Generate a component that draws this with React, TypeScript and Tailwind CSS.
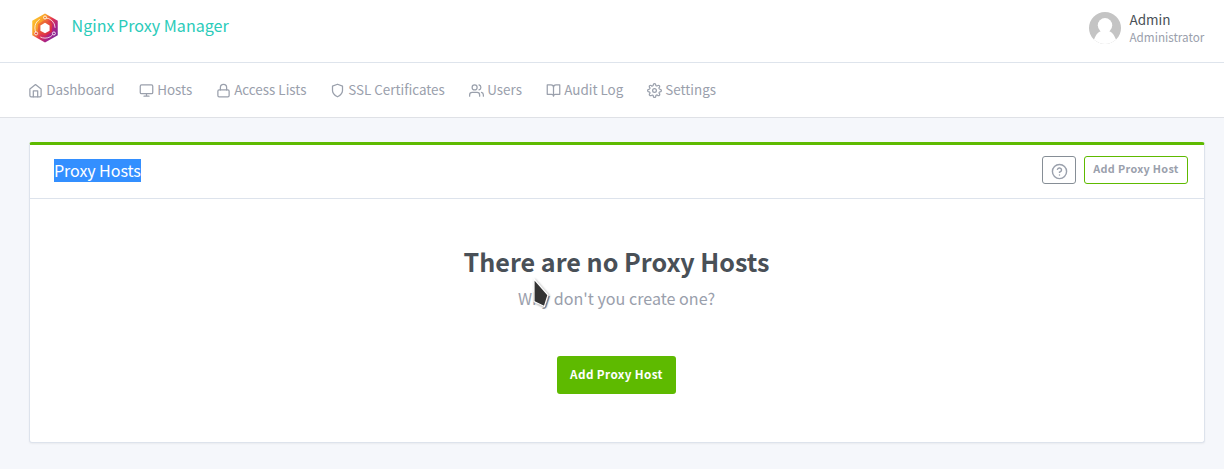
import React from "react";

type IconProps = { className?: string; children: React.ReactNode };

function Icon({ className = "", children }: IconProps) {
  return (
    <svg
      viewBox="0 0 24 24"
      fill="none"
      stroke="currentColor"
      strokeWidth={2}
      strokeLinecap="round"
      strokeLinejoin="round"
      className={`shrink-0 ${className}`}
    >
      {children}
    </svg>
  );
}

const navItems: { label: string; width: string; icon: React.ReactNode }[] = [
  {
    label: "Dashboard",
    width: "w-[111px]",
    icon: (
      <>
        <path d="M3 9.5 12 2.5l9 7V20a2 2 0 0 1-2 2H5a2 2 0 0 1-2-2z" />
        <path d="M8.5 22V12.5h7V22" />
      </>
    ),
  },
  {
    label: "Hosts",
    width: "w-[77px]",
    icon: (
      <>
        <rect x="2" y="3" width="20" height="14" rx="2" />
        <path d="M8 21h8M12 17v4" />
      </>
    ),
  },
  {
    label: "Access Lists",
    width: "w-[114px]",
    icon: (
      <>
        <rect x="3" y="11" width="18" height="11" rx="2" />
        <path d="M7 11V7a5 5 0 0 1 10 0v4" />
      </>
    ),
  },
  {
    label: "SSL Certificates",
    width: "w-[139px]",
    icon: <path d="M12 22s8-4 8-10V5l-8-3-8 3v7c0 6 8 10 8 10z" />,
  },
  {
    label: "Users",
    width: "w-[77px]",
    icon: (
      <>
        <path d="M17 21v-2a4 4 0 0 0-4-4H5a4 4 0 0 0-4 4v2" />
        <circle cx="9" cy="7" r="4" />
        <path d="M23 21v-2a4 4 0 0 0-3-3.87M16 3.13a4 4 0 0 1 0 7.75" />
      </>
    ),
  },
  {
    label: "Audit Log",
    width: "w-[101px]",
    icon: <path d="M2 3h6a4 4 0 0 1 4 4v14a3 3 0 0 0-3-3H2zM22 3h-6a4 4 0 0 0-4 4v14a3 3 0 0 1 3-3h7z" />,
  },
  {
    label: "Settings",
    width: "w-[90px]",
    icon: (
      <>
        <circle cx="12" cy="12" r="3" />
        <path d="M19.4 15a1.65 1.65 0 0 0 .33 1.82l.06.06a2 2 0 0 1 0 2.83 2 2 0 0 1-2.83 0l-.06-.06a1.65 1.65 0 0 0-1.82-.33 1.65 1.65 0 0 0-1 1.51V21a2 2 0 0 1-2 2 2 2 0 0 1-2-2v-.09A1.65 1.65 0 0 0 9 19.4a1.65 1.65 0 0 0-1.82.33l-.06.06a2 2 0 0 1-2.83 0 2 2 0 0 1 0-2.83l.06-.06a1.65 1.65 0 0 0 .33-1.82 1.65 1.65 0 0 0-1.51-1H3a2 2 0 0 1-2-2 2 2 0 0 1 2-2h.09A1.65 1.65 0 0 0 4.6 9a1.65 1.65 0 0 0-.33-1.82l-.06-.06a2 2 0 0 1 0-2.83 2 2 0 0 1 2.83 0l.06.06a1.65 1.65 0 0 0 1.82.33H9a1.65 1.65 0 0 0 1-1.51V3a2 2 0 0 1 2-2 2 2 0 0 1 2 2v.09a1.65 1.65 0 0 0 1 1.51 1.65 1.65 0 0 0 1.82-.33l.06-.06a2 2 0 0 1 2.83 0 2 2 0 0 1 0 2.83l-.06.06a1.65 1.65 0 0 0-.33 1.82V9a1.65 1.65 0 0 0 1.51 1H21a2 2 0 0 1 2 2 2 2 0 0 1-2 2h-.09a1.65 1.65 0 0 0-1.51 1z" />
      </>
    ),
  },
];

function Logo() {
  return (
    <svg viewBox="0 0 28 32" className="mt-px h-[30px] w-[28px] shrink-0">
      <defs>
        <linearGradient id="warm" x1="0" y1="0.1" x2="1" y2="0.9">
          <stop offset="0" stopColor="#fdd02c" />
          <stop offset="0.3" stopColor="#f9a02c" />
          <stop offset="0.52" stopColor="#e3364f" />
          <stop offset="0.75" stopColor="#a5218a" />
          <stop offset="1" stopColor="#6b2a9a" />
        </linearGradient>
        <linearGradient id="core" x1="0" y1="0" x2="1" y2="1">
          <stop offset="0" stopColor="#f7892a" />
          <stop offset="1" stopColor="#d3124f" />
        </linearGradient>
      </defs>
      <path d="M14 0.5 27.6 8.2v15.6L14 31.5.4 23.8V8.2z" fill="url(#warm)" />
      <circle cx="14" cy="16" r="10.8" fill="none" stroke="#fff" strokeOpacity="0.8" strokeWidth="1" strokeDasharray="17 5.6" strokeDashoffset="-5" />
      <path d="M14 7.4 21.4 11.7v8.6L14 24.6l-7.4-4.3v-8.6z" fill="url(#core)" />
      <path d="M14 10.4 18.9 13.2v5.6L14 21.6l-4.9-2.8v-5.6z" fill="#fff" />
      <circle cx="14" cy="4.8" r="1.6" fill="#f58a2c" stroke="#fff" strokeWidth="0.9" />
      <circle cx="4.5" cy="21.8" r="1.6" fill="#e8453a" stroke="#fff" strokeWidth="0.9" />
      <circle cx="23.5" cy="21.8" r="1.6" fill="#8d2490" stroke="#fff" strokeWidth="0.9" />
    </svg>
  );
}

function Avatar() {
  return (
    <svg viewBox="0 0 32 32" className="size-8 shrink-0">
      <defs>
        <clipPath id="round">
          <circle cx="16" cy="16" r="16" />
        </clipPath>
      </defs>
      <g clipPath="url(#round)">
        <rect width="32" height="32" fill="#c4c4c4" />
        <circle cx="16" cy="13.3" r="7.2" fill="#fff" />
        <path d="M0 33 5 27.5C6.5 24 8 20.8 12 19h8C24 20.8 25.5 24 27 27.5L32 33z" fill="#fff" />
      </g>
    </svg>
  );
}

export default function App() {
  return (
    <div className="h-[469px] w-full overflow-hidden bg-[#f5f7fb] font-['Noto_Sans_CJK_JP',sans-serif] text-[#495057]">
      <header className="flex h-[63px] items-start justify-between border-b border-[#dee4ec] bg-white pl-[31px] pr-[19px]">
        <div className="flex pt-[12px]">
          <Logo />
          <span className="ml-[12.5px] mt-[1px] whitespace-nowrap text-[16.1px] leading-[24px] text-[#2bcbba]">Nginx Proxy Manager</span>
        </div>
        <div className="flex pt-[12px]">
          <Avatar />
          <div className="ml-[8.5px] w-[75.5px] whitespace-nowrap">
            <div className="-mt-px text-[13.5px] leading-[16px]">Admin</div>
            <div className="mt-[2px] text-[11.7px] leading-[16px] text-[#9aa0ac]">Administrator</div>
          </div>
        </div>
      </header>
      <nav className="flex h-[55px] items-center border-b border-[#dfe1e6] bg-white pl-[28px] text-[#9aa0ac]">
        {navItems.map((item) => (
          <a key={item.label} className={`flex shrink-0 items-center whitespace-nowrap ${item.width}`}>
            <Icon className="size-[15px]">{item.icon}</Icon>
            <span className="mb-[2px] ml-[3.2px] text-[13.42px] leading-[20px]">{item.label}</span>
          </a>
        ))}
      </nav>
      <main className="pl-[29px] pr-[19px] pt-[24px]">
        <section className="h-[301px] overflow-hidden rounded-[3px] border border-t-[3px] border-[#dde3ec] border-t-[#5eba00] bg-white shadow-[0_1px_2px_rgba(0,0,0,0.05)]">
          <div className="flex h-[54px] justify-between border-b border-[#dde3ec] pl-[24px] pr-[16px]">
            <h3 className="mt-[14px] h-[23px] w-[87px] whitespace-nowrap bg-[#338fff] text-[16.1px] leading-[23px] tracking-[-0.1px] text-white">Proxy Hosts</h3>
            <div className="mt-[11px] flex gap-[8px]">
              <button className="flex h-[28px] w-[34px] items-center justify-center rounded-[3px] border border-[#868e96] pt-[3px] text-[#9aa0ac]">
                <Icon className="size-[17px]">
                  <circle cx="12" cy="12" r="10" />
                  <path d="M9.09 9a3 3 0 0 1 5.83 1c0 2-3 3-3 3M12 17h.01" />
                </Icon>
              </button>
              <button className="h-[28px] w-[104px] whitespace-nowrap rounded-[3px] border border-[#5eba00] pb-[4px] text-[10.8px] font-bold leading-[22px] tracking-[0.35px] text-[#9aa0ac]">
                Add Proxy Host
              </button>
            </div>
          </div>
          <div className="flex flex-col items-center pr-px pt-[44px]">
            <h1 className="whitespace-nowrap text-[25.1px] font-bold leading-[36px]">There are no Proxy Hosts</h1>
            <div className="relative mt-[7px] whitespace-nowrap text-[16.1px] leading-[24px] text-[#9aa0ac]">
              Why don't you create one?
              <svg viewBox="0 0 20 32" className="absolute left-[13px] top-[-9px] h-[32px] w-[20px] drop-shadow-[1px_1px_1px_rgba(0,0,0,0.35)]">
                <path d="M3 2 17 18 13.4 29.5 3 24.5z" fill="#333" stroke="#fff" strokeWidth="1.2" />
              </svg>
            </div>
            <button className="mt-[46px] h-[38px] w-[119px] whitespace-nowrap rounded-[3px] bg-[#5eba00] pb-[3px] text-[11.7px] font-bold leading-[35px] tracking-[0.4px] text-white">
              Add Proxy Host
            </button>
          </div>
        </section>
      </main>
    </div>
  );
}
